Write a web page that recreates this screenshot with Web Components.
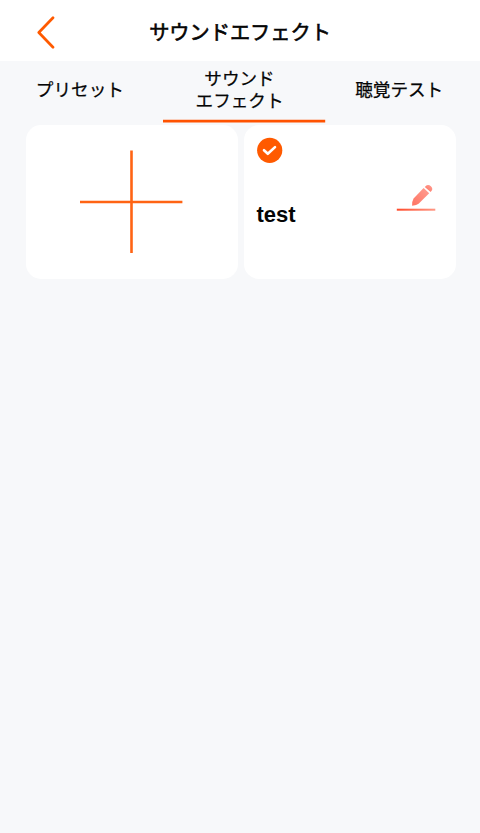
<!DOCTYPE html>
<html lang="ja">
<head>
<meta charset="utf-8">
<title>サウンドエフェクト</title>
<style>
html,body{margin:0;height:100%;background:#f7f8fa}
body{font-family:"Liberation Sans","Noto Sans CJK JP",sans-serif;color:#050505}
</style>
</head>
<body>
<sound-screen></sound-screen>
<script>
const define = (name, html) => customElements.define(name, class extends HTMLElement {
  constructor() {
    super();
    const t = document.createElement('template');
    t.innerHTML = html;
    this.attachShadow({mode: 'open'}).append(t.content.cloneNode(true));
  }
});

define('app-header', `
<style>
:host{display:grid;grid-template-columns:75px 1fr 75px;align-items:center;height:61px;background:#fff}
svg{display:block;margin-left:34px}
h1{margin:0;padding:5px 0 0;text-align:center;font-size:20.2px;line-height:30px;font-weight:400;white-space:nowrap;-webkit-text-stroke:.6px #050505}
</style>
<svg width="24" height="36" viewBox="0 0 24 36" fill="none" stroke="#ff5a00" stroke-width="2.7" stroke-linecap="round" stroke-linejoin="round"><path d="M19 4.8 4.8 19.5 19 34.2"/></svg>
<h1><slot></slot></h1>`);

define('tab-bar', `
<style>:host{display:grid;grid-template-columns:repeat(3,159.7px);height:62px}</style>
<slot></slot>`);

define('tab-item', `
<style>
:host{position:relative;display:flex;align-items:center;justify-content:center;box-sizing:border-box;height:62px;padding-bottom:6px;font-size:17.6px;line-height:22.5px;font-weight:400;text-align:center;white-space:nowrap;-webkit-text-stroke:.25px #050505}
svg{display:none}
:host([active]) svg{display:block;position:absolute;left:3.3px;bottom:1px}
</style>
<span><slot></slot></span><svg width="163" height="4" viewBox="0 0 163 4"><path d="M0 2.1H162.2" stroke="#ff5200" stroke-width="2.6"/></svg>`);

define('effect-card', `
<style>:host{display:block;box-sizing:border-box;height:154px;border-radius:15px;background:#fff}</style>
<slot></slot>`);

define('plus-icon', `
<style>:host{display:flex;height:100%;align-items:center;justify-content:center}svg{display:block}</style>
<svg width="104" height="104" viewBox="0 0 104 104" fill="none" stroke="#ff6414" stroke-width="2.6"><path d="M0 52H102.4M51.5 .5V103"/></svg>`);

define('check-badge', `
<style>:host{display:block}svg{display:block}</style>
<svg width="26" height="26" viewBox="0 0 26 26"><circle cx="12.7" cy="13.3" r="12.6" fill="#ff5a00"/><path d="M7 13.2 10.8 16.8 18 10.1" fill="none" stroke="#fff" stroke-width="2.6" stroke-linecap="round" stroke-linejoin="round"/></svg>`);

define('edit-icon', `
<style>:host{display:block}svg{display:block}</style>
<svg width="40" height="30" viewBox="0 0 40 30">
<defs><linearGradient id="l"><stop stop-color="#ff4b2b"/><stop offset="1" stop-color="#ff9885"/></linearGradient>
<linearGradient id="p" x1="1" y1="0" x2="0" y2="1"><stop stop-color="#ff9f94"/><stop offset="1" stop-color="#ff7361"/></linearGradient></defs>
<rect x=".8" y="25.7" width="38.5" height="2" fill="url(#l)"/>
<g fill="url(#p)"><path d="M27.6 5 33.2 10.2 22.6 20.7Q20.8 22.2 16.1 22.7 16 17.8 17.6 15.4Z"/><path d="M29.3 3.4Q32.1.9 34.9 3.2 37.4 5.8 35.4 8L34.6 8.9 28.8 3.9Z"/></g></svg>`);

define('saved-effect', `
<style>
:host{display:grid;grid-template-columns:1fr 40px;padding:12px 20px 0 12.5px}
check-badge{grid-column:1/-1}
b{font-size:22px;line-height:26px;margin-top:39px}
edit-icon{margin-top:20px}
</style>
<check-badge></check-badge><b><slot></slot></b><edit-icon></edit-icon>`);

define('sound-screen', `
<style>
:host{display:block;min-height:100%;overflow:hidden}
tab-bar{padding-top:1px}
main{display:grid;grid-template-columns:212px 212px;gap:6.5px;padding:1px 0 0 25.5px}
</style>
<app-header>サウンドエフェクト</app-header>
<tab-bar>
<tab-item>プリセット</tab-item>
<tab-item active>サウンド<br>エフェクト</tab-item>
<tab-item>聴覚テスト</tab-item>
</tab-bar>
<main>
<effect-card><plus-icon></plus-icon></effect-card>
<effect-card><saved-effect>test</saved-effect></effect-card>
</main>`);
</script>
</body>
</html>
